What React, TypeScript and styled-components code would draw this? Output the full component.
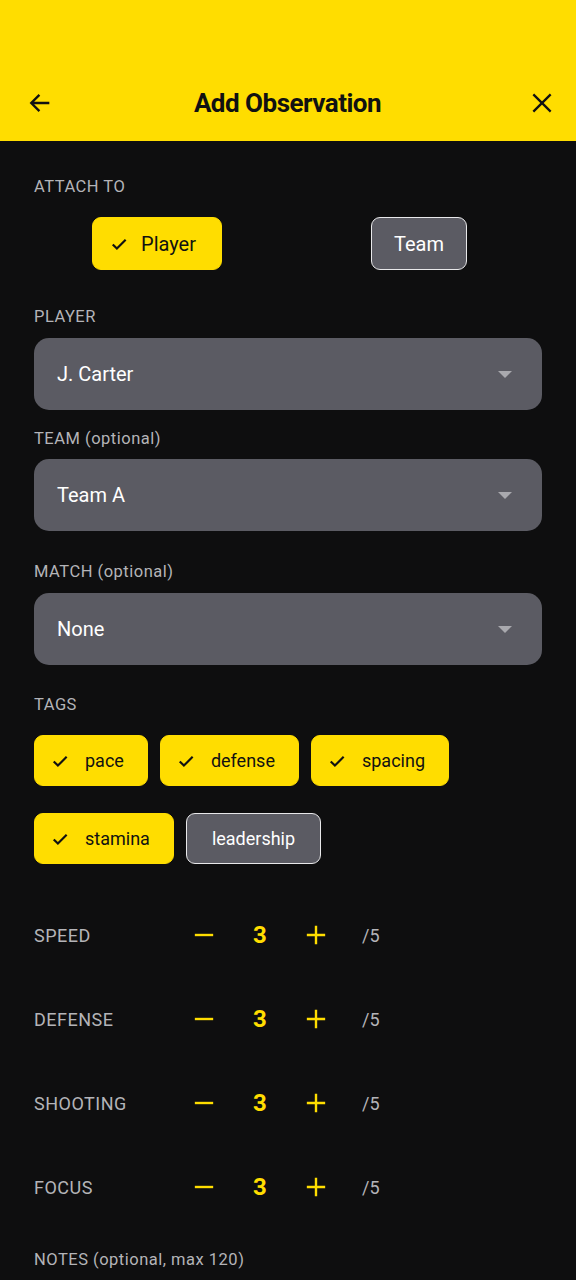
import styled, { createGlobalStyle } from 'styled-components';

const GlobalStyle = createGlobalStyle`
  html, body {
    margin: 0;
    padding: 0;
    background: #0e0e0f;
    font-family: Roboto, "Liberation Sans", sans-serif;
  }
  * { box-sizing: border-box; }
`;

const YELLOW = '#ffdd00';
const GREY = '#5b5b63';

const Page = styled.div`
  width: 576px;
  min-height: 1280px;
  background: #0e0e0f;
  color: #fff;
`;

const Header = styled.header`
  background: ${YELLOW};
  height: 141px;
  padding-top: 64px;
`;

const Toolbar = styled.div`
  height: 77px;
  display: flex;
  align-items: center;
  justify-content: space-between;
  padding: 0 18px 0 24px;
`;

const IconButton = styled.button`
  width: 32px;
  height: 32px;
  border: none;
  background: none;
  padding: 0;
  display: flex;
  align-items: center;
  justify-content: center;
  color: #111;
`;

const Title = styled.h1`
  margin: 0 7px 0 0;
  font-size: 26px;
  font-weight: 700;
  letter-spacing: -0.5px;
  color: #111;
`;

const Content = styled.main`
  padding: 36px 34px 0;
`;

const Label = styled.div<{ $mt?: number; $mb?: number }>`
  font-size: 16.5px;
  line-height: 20px;
  letter-spacing: 0.5px;
  color: #b4b4b8;
  margin-top: ${(p) => p.$mt ?? 0}px;
  margin-bottom: ${(p) => p.$mb ?? 10}px;
`;

const ToggleRow = styled.div`
  display: flex;
  gap: 16px;
  margin-top: 20px;
`;

const ToggleCell = styled.div`
  flex: 1;
  display: flex;
  justify-content: center;
`;

const Toggle = styled.button<{ $on?: boolean }>`
  height: 53px;
  border-radius: 9px;
  display: flex;
  align-items: center;
  gap: 12px;
  font-family: inherit;
  font-size: 20px;
  padding: ${(p) => (p.$on ? '0 25px 0 16px' : '0 22px')};
  background: ${(p) => (p.$on ? YELLOW : GREY)};
  color: ${(p) => (p.$on ? '#111' : '#fff')};
  border: ${(p) => (p.$on ? `1.5px solid ${YELLOW}` : '1.5px solid #e8e8ea')};
`;

const Select = styled.div`
  height: 72px;
  border-radius: 15px;
  background: ${GREY};
  display: flex;
  align-items: center;
  justify-content: space-between;
  padding: 0 30px 0 23px;
  font-size: 20px;
  color: #fff;
`;

const Caret = styled.span`
  width: 0;
  height: 0;
  border-left: 7px solid transparent;
  border-right: 7px solid transparent;
  border-top: 7px solid #a9a9ae;
`;

const Chips = styled.div`
  display: flex;
  flex-wrap: wrap;
  column-gap: 12px;
  row-gap: 27px;
  margin-top: 20px;
`;

const Chip = styled.button<{ $on?: boolean }>`
  height: 51px;
  border-radius: 9px;
  display: flex;
  align-items: center;
  gap: 15px;
  font-family: inherit;
  font-size: 18px;
  padding: ${(p) => (p.$on ? '0 23px 0 15px' : '0 25px')};
  background: ${(p) => (p.$on ? YELLOW : GREY)};
  color: ${(p) => (p.$on ? '#111' : '#fff')};
  border: ${(p) => (p.$on ? `1.5px solid ${YELLOW}` : '1.5px solid #e8e8ea')};
`;

const Ratings = styled.div`
  display: flex;
  flex-direction: column;
  gap: 36px;
  margin-top: 47px;
`;

const RatingRow = styled.div`
  display: flex;
  align-items: center;
  height: 48px;
`;

const RatingName = styled.div`
  width: 146px;
  font-size: 18px;
  letter-spacing: 0.5px;
  color: #b4b4b8;
`;

const StepButton = styled.button`
  width: 48px;
  height: 48px;
  border: none;
  background: none;
  padding: 0;
  display: flex;
  align-items: center;
  justify-content: center;
  color: ${YELLOW};
`;

const Value = styled.div`
  width: 64px;
  text-align: center;
  font-size: 24px;
  font-weight: 700;
  color: ${YELLOW};
`;

const OutOf = styled.div`
  margin-left: 22px;
  font-size: 18px;
  color: #b4b4b8;
`;

const Check = ({ size = 20 }: { size?: number }) => (
  <svg width={size} height={size} viewBox="0 0 24 24" fill="none" stroke="#111" strokeWidth="2.6">
    <path d="M4.5 12.5l5 5L20 7" />
  </svg>
);

const TAGS = [
  { name: 'pace', on: true },
  { name: 'defense', on: true },
  { name: 'spacing', on: true },
  { name: 'stamina', on: true },
  { name: 'leadership', on: false },
];

const RATINGS = ['SPEED', 'DEFENSE', 'SHOOTING', 'FOCUS'];

export default function App() {
  return (
    <Page>
      <GlobalStyle />
      <Header>
        <Toolbar>
          <IconButton aria-label="back">
            <svg width="28" height="28" viewBox="0 0 24 24" fill="none" stroke="#111" strokeWidth="2">
              <path d="M20 12H4.5M11.5 5l-7 7 7 7" />
            </svg>
          </IconButton>
          <Title>Add Observation</Title>
          <IconButton aria-label="close">
            <svg width="26" height="26" viewBox="0 0 24 24" fill="none" stroke="#111" strokeWidth="2.1">
              <path d="M4 4l16 16M20 4L4 20" />
            </svg>
          </IconButton>
        </Toolbar>
      </Header>

      <Content>
        <Label>ATTACH TO</Label>
        <ToggleRow>
          <ToggleCell>
            <Toggle $on>
              <Check />
              Player
            </Toggle>
          </ToggleCell>
          <ToggleCell>
            <Toggle>Team</Toggle>
          </ToggleCell>
        </ToggleRow>

        <Label $mt={37} $mb={11}>PLAYER</Label>
        <Select>
          J. Carter
          <Caret />
        </Select>

        <Label $mt={19} $mb={10}>TEAM (optional)</Label>
        <Select>
          Team A
          <Caret />
        </Select>

        <Label $mt={31} $mb={11}>MATCH (optional)</Label>
        <Select>
          None
          <Caret />
        </Select>

        <Label $mt={30} $mb={0}>TAGS</Label>
        <Chips>
          {TAGS.map((t) => (
            <Chip key={t.name} $on={t.on}>
              {t.on && <Check />}
              {t.name}
            </Chip>
          ))}
        </Chips>

        <Ratings>
          {RATINGS.map((r) => (
            <RatingRow key={r}>
              <RatingName>{r}</RatingName>
              <StepButton aria-label="decrease">
                <svg width="22" height="22" viewBox="0 0 24 24" fill="none" stroke={YELLOW} strokeWidth="2.6">
                  <path d="M2 12h20" />
                </svg>
              </StepButton>
              <Value>3</Value>
              <StepButton aria-label="increase">
                <svg width="22" height="22" viewBox="0 0 24 24" fill="none" stroke={YELLOW} strokeWidth="2.6">
                  <path d="M2 12h20M12 2v20" />
                </svg>
              </StepButton>
              <OutOf>/5</OutOf>
            </RatingRow>
          ))}
        </Ratings>

        <Label $mt={39}>NOTES (optional, max 120)</Label>
      </Content>
    </Page>
  );
}
